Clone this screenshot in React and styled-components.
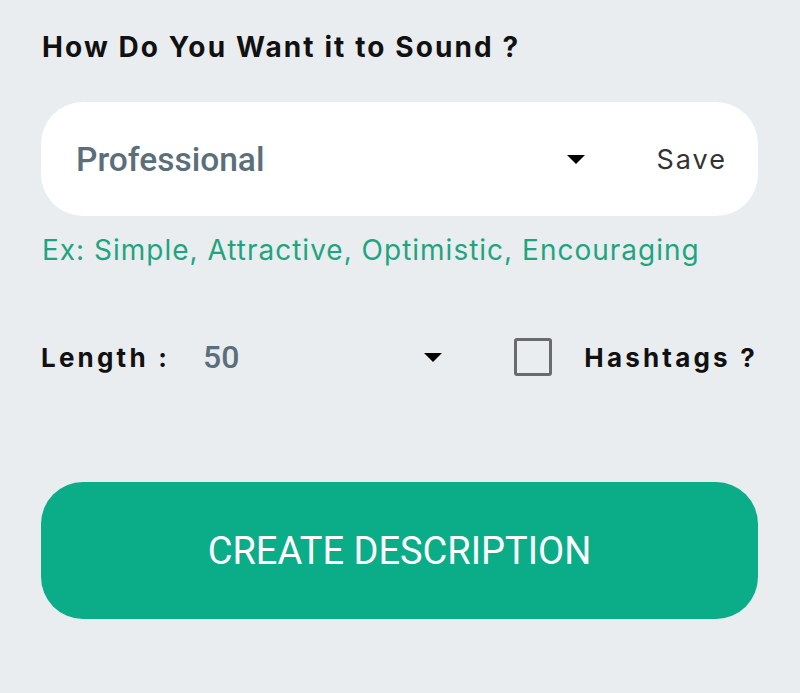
import React from "react";
import styled, { createGlobalStyle } from "styled-components";

const Global = createGlobalStyle`
  html, body { margin: 0; padding: 0; background: #eaedf0; }
  body { width: 800px; height: 693px; overflow: hidden; }
`;

const Page = styled.div`
  box-sizing: border-box;
  width: 800px;
  height: 693px;
  padding: 30px 42px 0 41px;
  display: flex;
  flex-direction: column;
  background: #eaedf0;
`;

const Title = styled.h2`
  margin: 0 0 0 1px;
  font-family: Inter, "Noto Sans", sans-serif;
  font-weight: 700;
  font-size: 28px;
  line-height: 34px;
  color: #111;
  letter-spacing: 2.1px;
`;

const SelectBox = styled.div`
  margin-top: 38px;
  height: 114px;
  border-radius: 42px;
  background: #fff;
  display: flex;
  align-items: center;
  padding: 0 31px 0 35px;
`;

const SelectValue = styled.span`
  flex: 1;
  font-family: Roboto, sans-serif;
  font-size: 33.5px;
  font-weight: 500;
  color: #5b6f7a;
`;

const Caret = styled.span`
  width: 0;
  height: 0;
  border-left: 9px solid transparent;
  border-right: 9px solid transparent;
  border-top: 9px solid #000;
  margin-right: ${(p) => p.$gap}px;
`;

const SaveLabel = styled.span`
  font-family: Inter, "Noto Sans", sans-serif;
  font-size: 27px;
  letter-spacing: 2px;
  color: #333;
`;

const Hint = styled.p`
  margin: 16px 0 0 1px;
  font-family: Inter, "Noto Sans", sans-serif;
  font-size: 28px;
  line-height: 36px;
  letter-spacing: 1px;
  color: #1ea57f;
`;

const Row = styled.div`
  margin-top: 69px;
  display: flex;
  align-items: center;
  height: 40px;
`;

const BoldLabel = styled.span`
  font-family: Inter, "Noto Sans", sans-serif;
  font-weight: 700;
  font-size: 26px;
  color: #111;
  letter-spacing: 3.2px;
`;

const LengthValue = styled.span`
  margin-left: 33px;
  flex: 1;
  font-family: Roboto, sans-serif;
  font-size: 32px;
  font-weight: 500;
  color: #5b6f7a;
`;

const Check = styled.span`
  box-sizing: border-box;
  width: 38px;
  height: 38px;
  border: 3.5px solid #6b6b6b;
  border-radius: 3px;
  margin-right: 32px;
`;

const Button = styled.button`
  margin-top: 105px;
  height: 137px;
  border: none;
  border-radius: 42px;
  background: #0aad87;
  color: #fff;
  font-family: Roboto, sans-serif;
  font-size: 38px;
  font-weight: 400;
  cursor: pointer;
`;

export default function App() {
  return (
    <>
      <Global />
      <Page>
        <Title>How Do You Want it to Sound ?</Title>
        <SelectBox>
          <SelectValue>Professional</SelectValue>
          <Caret $gap={72} />
          <SaveLabel>Save</SaveLabel>
        </SelectBox>
        <Hint>Ex: Simple, Attractive, Optimistic, Encouraging</Hint>
        <Row>
          <BoldLabel>Length :</BoldLabel>
          <LengthValue>50</LengthValue>
          <Caret $gap={72} />
          <Check />
          <BoldLabel>Hashtags ?</BoldLabel>
        </Row>
        <Button>CREATE DESCRIPTION</Button>
      </Page>
    </>
  );
}
